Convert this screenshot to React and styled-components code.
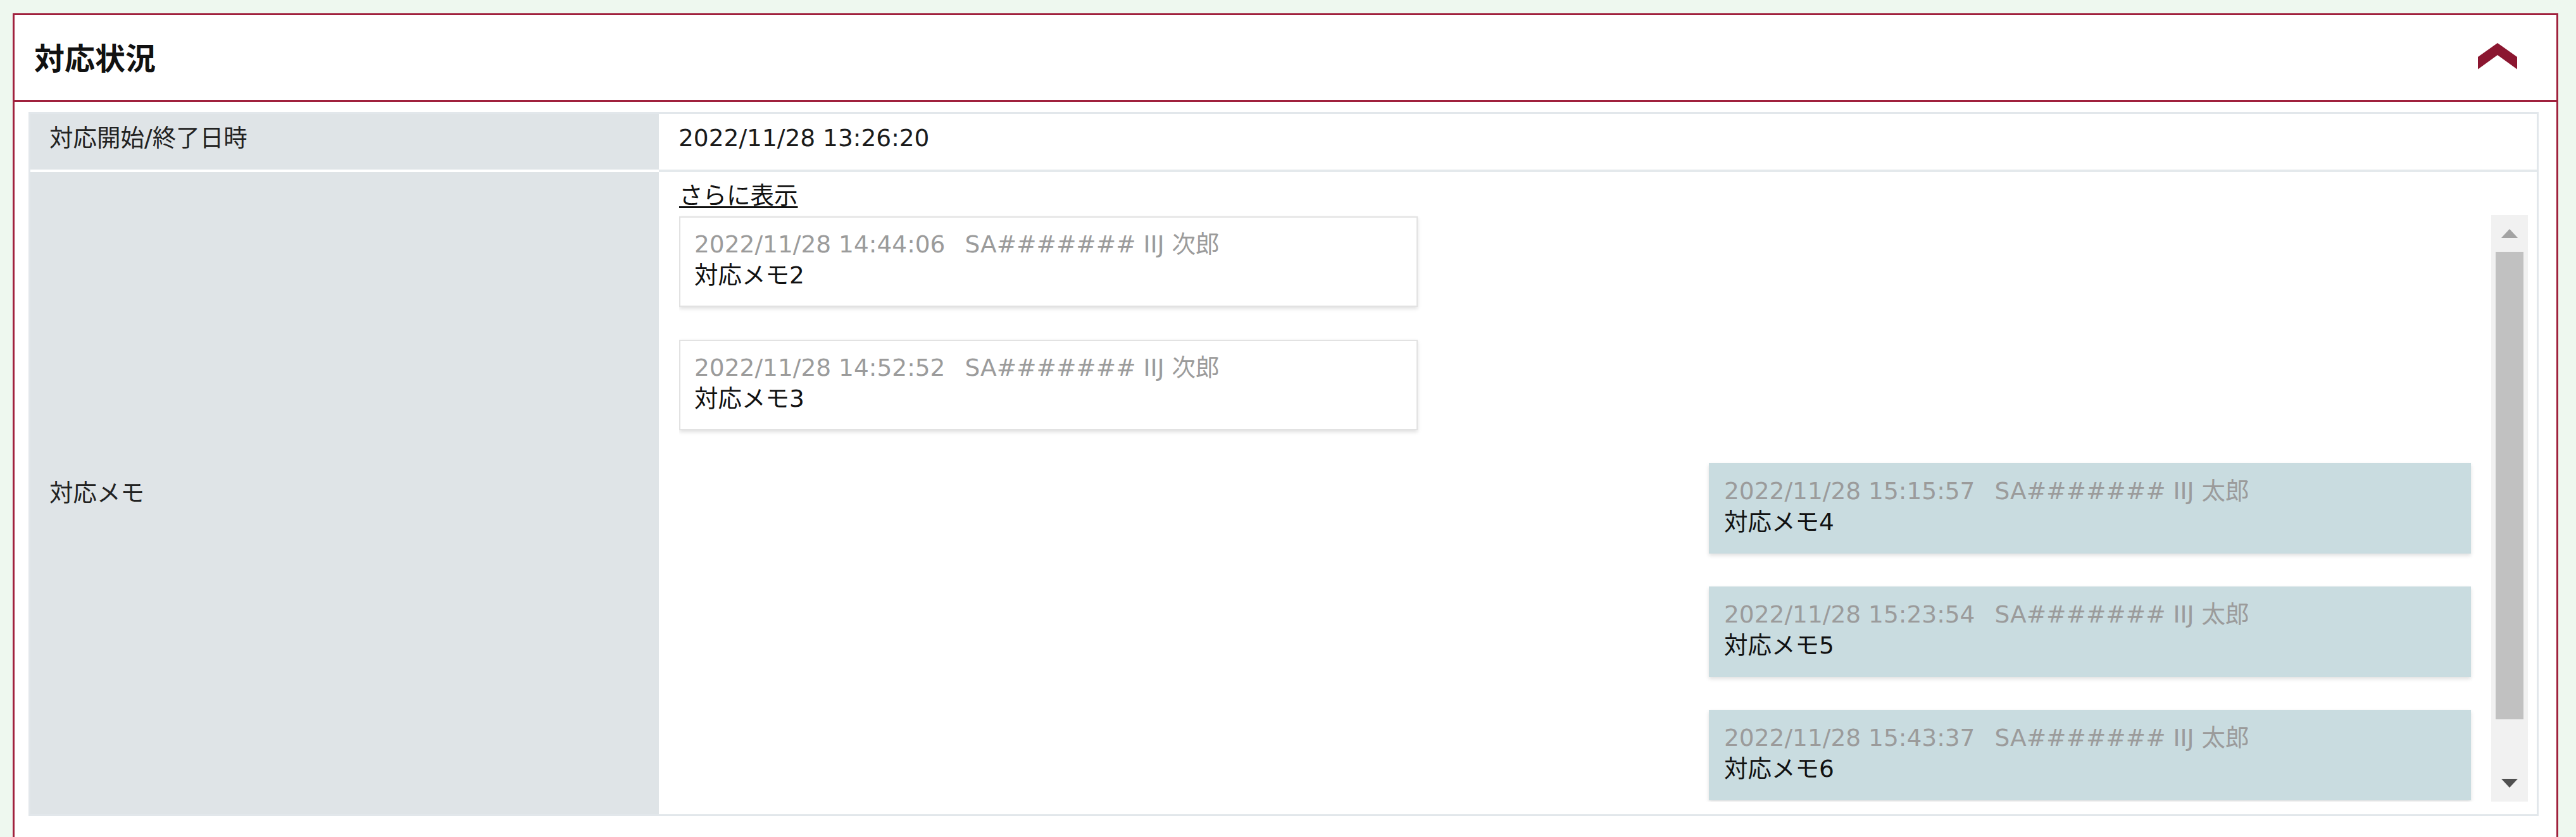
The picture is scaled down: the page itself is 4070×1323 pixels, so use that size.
import React from "react";
import styled, { createGlobalStyle } from "styled-components";

const GlobalStyle = createGlobalStyle`
  html, body {
    margin: 0;
    padding: 0;
    background: #eef8ef;
  }
  body {
    font-family: "DejaVu Sans", "Noto Sans CJK JP", sans-serif;
    color: #1e1e1e;
  }
  * { box-sizing: border-box; }
`;

const Page = styled.div`
  padding: 21px 28px 0 20px;
`;

const Panel = styled.section`
  background: #fff;
  border: 3px solid #a0213d;
  border-bottom: none;
`;

const PanelHeader = styled.header`
  display: flex;
  align-items: center;
  justify-content: space-between;
  height: 137px;
  padding: 0 62px 5px 31px;
  border-bottom: 3px solid #a0213d;
`;

const Title = styled.h2`
  margin: 0;
  font-family: "Noto Sans CJK JP", sans-serif;
  font-size: 48px;
  font-weight: 700;
  line-height: 1;
  color: #111;
`;

const ToggleButton = styled.button`
  display: flex;
  padding: 0;
  border: none;
  background: none;
  cursor: pointer;
  color: #8b1630;
`;

const PanelBody = styled.div`
  padding: 16px 28px 40px 22px;
`;

const InfoTable = styled.div`
  display: grid;
  grid-template-columns: 993px 1fr;
  grid-template-rows: 92px auto;
  border: 3px solid #e2e7eb;
  font-size: 37.5px;
  line-height: 49px;
`;

const LabelCell = styled.div`
  display: flex;
  align-items: ${(p) => (p.$middle ? "center" : "flex-start")};
  padding: ${(p) => (p.$middle ? "0 0 0 30px" : "14px 0 0 30px")};
  background: #dfe4e7;
  color: #222;
  border-bottom: ${(p) => (p.$sep ? "4px solid #fff" : "none")};
`;

const ValueCell = styled.div`
  padding: ${(p) => p.$pad || "14px 16px 0 31px"};
  background: #fff;
  color: #1a1a1a;
  border-bottom: ${(p) => (p.$sep ? "4px solid #e4e9ec" : "none")};
`;

const MoreLink = styled.a`
  display: inline-block;
  margin-bottom: 6px;
  color: #111;
  text-decoration: underline;
  text-decoration-thickness: 3px;
  text-underline-offset: 4px;
  cursor: pointer;
`;

const MemoViewport = styled.div`
  display: flex;
  height: 927px;
`;

const MemoList = styled.div`
  flex: 1;
  min-width: 0;
  overflow: hidden;
  display: flex;
  flex-direction: column;
  gap: 52px;
  padding: 2px 32px 92px 0;
`;

const ScrollBar = styled.div`
  flex: none;
  width: 58px;
  display: flex;
  flex-direction: column;
  background: #f1f1f1;
`;

const ScrollButton = styled.div`
  flex: none;
  height: 58px;
  display: flex;
  align-items: center;
  justify-content: center;

  &::before {
    content: "";
    width: 0;
    height: 0;
    border-left: 13px solid transparent;
    border-right: 13px solid transparent;
    ${(p) =>
      p.$down
        ? "border-top: 14px solid #505050;"
        : "border-bottom: 14px solid #a3a3a3;"}
  }
`;

const ScrollTrack = styled.div`
  flex: 1;
  padding: 0 7px;
`;

const ScrollThumb = styled.div`
  height: 739px;
  background: #c1c1c1;
`;

const MemoCard = styled.div`
  flex: none;
  align-self: ${(p) => (p.$own ? "flex-end" : "flex-start")};
  width: ${(p) => (p.$own ? "1204px" : "1167px")};
  height: 143px;
  padding: 18px 22px 0;
  background: ${(p) => (p.$own ? "#c9dce0" : "#fff")};
  border: 2px solid ${(p) => (p.$own ? "#c9dce0" : "#e2e2e2")};
  box-shadow: 0 3px 6px rgba(0, 0, 0, 0.13);
`;

const MemoMeta = styled.div`
  color: #9b9b9b;
  white-space: nowrap;
`;

const MemoAuthor = styled.span`
  margin-left: 31px;
`;

const MemoText = styled.div`
  color: #111;
`;

const ChevronUp = () => (
  <svg width="62" height="42" viewBox="0 0 62 42" aria-hidden="true">
    <polygon points="0,22 31,0 62,22 62,41.5 31,19 0,41.5" fill="currentColor" />
  </svg>
);

const memos = [
  { date: "2022/11/28 14:44:06", user: "SA####### IIJ 次郎", text: "対応メモ2", own: false },
  { date: "2022/11/28 14:52:52", user: "SA####### IIJ 次郎", text: "対応メモ3", own: false },
  { date: "2022/11/28 15:15:57", user: "SA####### IIJ 太郎", text: "対応メモ4", own: true },
  { date: "2022/11/28 15:23:54", user: "SA####### IIJ 太郎", text: "対応メモ5", own: true },
  { date: "2022/11/28 15:43:37", user: "SA####### IIJ 太郎", text: "対応メモ6", own: true },
];

export default function App() {
  return (
    <>
      <GlobalStyle />
      <Page>
        <Panel>
          <PanelHeader>
            <Title>対応状況</Title>
            <ToggleButton aria-label="閉じる">
              <ChevronUp />
            </ToggleButton>
          </PanelHeader>
          <PanelBody>
            <InfoTable>
              <LabelCell $sep>対応開始/終了日時</LabelCell>
              <ValueCell $sep>2022/11/28 13:26:20</ValueCell>
              <LabelCell $middle>対応メモ</LabelCell>
              <ValueCell $pad="13px 14px 20px 32px">
                <MoreLink>さらに表示</MoreLink>
                <MemoViewport>
                  <MemoList>
                    {memos.map((m) => (
                      <MemoCard key={m.date} $own={m.own}>
                        <MemoMeta>
                          {m.date}
                          <MemoAuthor>{m.user}</MemoAuthor>
                        </MemoMeta>
                        <MemoText>{m.text}</MemoText>
                      </MemoCard>
                    ))}
                  </MemoList>
                  <ScrollBar aria-hidden="true">
                    <ScrollButton />
                    <ScrollTrack>
                      <ScrollThumb />
                    </ScrollTrack>
                    <ScrollButton $down />
                  </ScrollBar>
                </MemoViewport>
              </ValueCell>
            </InfoTable>
          </PanelBody>
        </Panel>
      </Page>
    </>
  );
}
